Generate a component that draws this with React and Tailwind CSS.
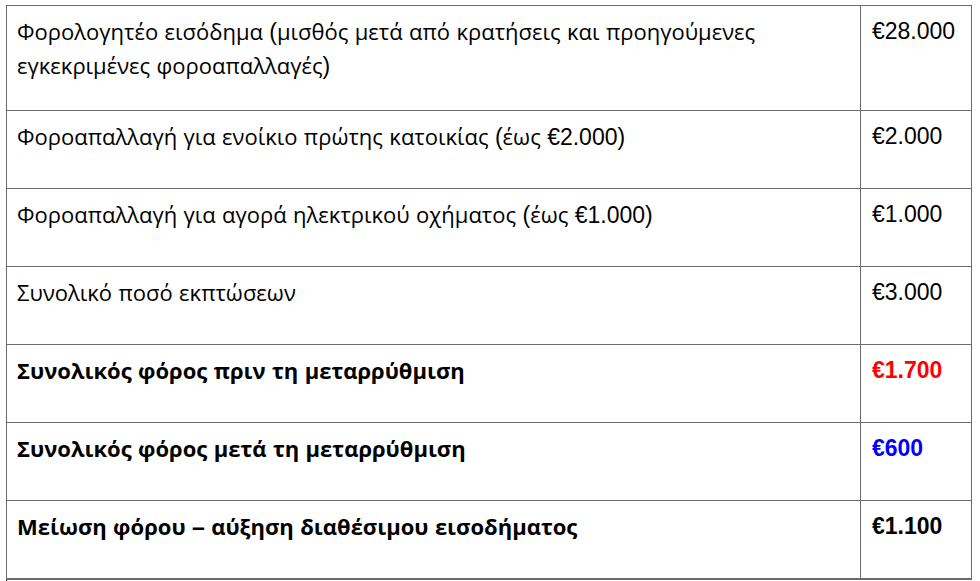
const rows = [
  { label: 'Φορολογητέο εισόδημα (μισθός μετά από κρατήσεις και προηγούμενες εγκεκριμένες φοροαπαλλαγές)', value: '€28.000', tall: true },
  { label: 'Φοροαπαλλαγή για ενοίκιο πρώτης κατοικίας (έως €2.000)', value: '€2.000' },
  { label: 'Φοροαπαλλαγή για αγορά ηλεκτρικού οχήματος (έως €1.000)', value: '€1.000' },
  { label: 'Συνολικό ποσό εκπτώσεων', value: '€3.000' },
  { label: 'Συνολικός φόρος πριν τη μεταρρύθμιση', value: '€1.700', bold: true, color: 'text-[#ff0000]' },
  { label: 'Συνολικός φόρος μετά τη μεταρρύθμιση', value: '€600', bold: true, color: 'text-[#0000ff]' },
  { label: 'Μείωση φόρου – αύξηση διαθέσιμου εισοδήματος', value: '€1.100', bold: true },
];

// greek runs get the humanist face, the rest stays Arial-like
const Mixed = ({ text }) =>
  text.split(/([\u0370-\u03FF\u1F00-\u1FFF]+)/).map((part, i) =>
    /[\u0370-\u03FF\u1F00-\u1FFF]/.test(part) ? (
      <span key={i} className="font-['Open_Sans',sans-serif]">{part}</span>
    ) : (
      <span key={i} className="text-[23px]">{part}</span>
    )
  );

export default function App() {
  return (
    <div className="w-[980px] h-[581px] bg-white overflow-hidden pt-[5px] pl-[6px] font-['Liberation_Sans',Arial,sans-serif] text-black">
      <div className="w-[966px] border border-[#6b6b6b]">
        {rows.map((row) => (
          <div
            key={row.value}
            className={`flex border-b border-[#6b6b6b] ${row.tall ? 'h-[105px]' : 'h-[78px]'} ${row.bold ? 'font-bold' : ''}`}
          >
            <div className="w-[854px] shrink-0 border-r border-[#6b6b6b] pl-[10px] pr-[40px] pt-[9px] text-[22px] leading-[33px]">
              <Mixed text={row.label} />
            </div>
            <div className={`flex-1 pl-[11px] pt-[9px] text-[23px] leading-[33px] ${row.color || ''}`}>
              {row.value}
            </div>
          </div>
        ))}
      </div>
      <div className="w-px h-[10px] bg-black" />
    </div>
  );
}
